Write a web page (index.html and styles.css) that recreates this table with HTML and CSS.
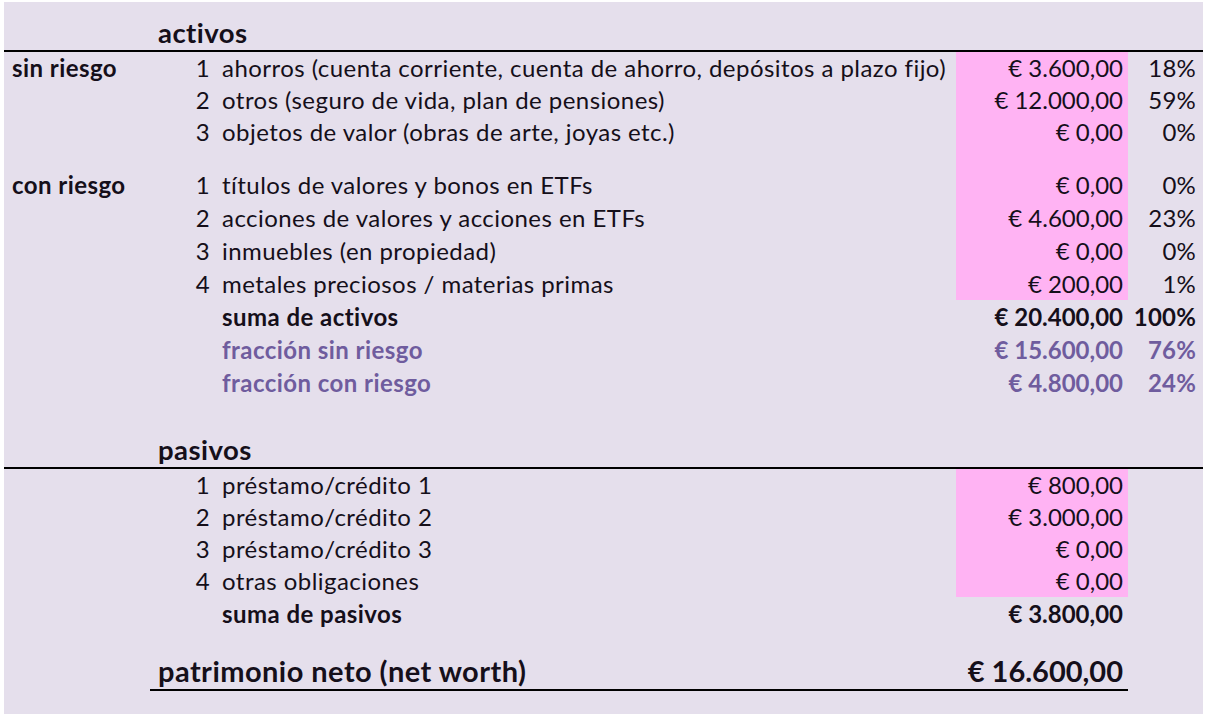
FILE: index.html
```html
<!DOCTYPE html>
<html lang="es">
<head>
<meta charset="utf-8">
<title>activos y pasivos</title>
<link rel="stylesheet" href="styles.css">
</head>
<body>
<div class="sheet">
  <div class="row head"><div class="c-a"></div><div class="title">activos</div></div>

  <div class="row r32"><div class="c-a b">sin riesgo</div><div class="c-n">1</div><div class="c-d">ahorros (cuenta corriente, cuenta de ahorro, depósitos a plazo fijo)</div><div class="c-v pink">€ 3.600,00</div><div class="c-p">18%</div></div>
  <div class="row r32"><div class="c-a"></div><div class="c-n">2</div><div class="c-d">otros (seguro de vida, plan de pensiones)</div><div class="c-v pink">€ 12.000,00</div><div class="c-p">59%</div></div>
  <div class="row r32"><div class="c-a"></div><div class="c-n">3</div><div class="c-d">objetos de valor (obras de arte, joyas etc.)</div><div class="c-v pink">€ 0,00</div><div class="c-p">0%</div></div>
  <div class="row gap"><div class="c-a"></div><div class="c-n"></div><div class="c-d"></div><div class="c-v pink"></div><div class="c-p"></div></div>

  <div class="row"><div class="c-a b">con riesgo</div><div class="c-n">1</div><div class="c-d">títulos de valores y bonos en ETFs</div><div class="c-v pink">€ 0,00</div><div class="c-p">0%</div></div>
  <div class="row"><div class="c-a"></div><div class="c-n">2</div><div class="c-d">acciones de valores y acciones en ETFs</div><div class="c-v pink">€ 4.600,00</div><div class="c-p">23%</div></div>
  <div class="row"><div class="c-a"></div><div class="c-n">3</div><div class="c-d">inmuebles (en propiedad)</div><div class="c-v pink">€ 0,00</div><div class="c-p">0%</div></div>
  <div class="row"><div class="c-a"></div><div class="c-n">4</div><div class="c-d">metales preciosos / materias primas</div><div class="c-v pink">€ 200,00</div><div class="c-p">1%</div></div>
  <div class="row b"><div class="c-a"></div><div class="c-n"></div><div class="c-d">suma de activos</div><div class="c-v">€ 20.400,00</div><div class="c-p">100%</div></div>
  <div class="row b purple"><div class="c-a"></div><div class="c-n"></div><div class="c-d">fracción sin riesgo</div><div class="c-v">€ 15.600,00</div><div class="c-p">76%</div></div>
  <div class="row b purple"><div class="c-a"></div><div class="c-n"></div><div class="c-d">fracción con riesgo</div><div class="c-v">€ 4.800,00</div><div class="c-p">24%</div></div>

  <div class="row blank"></div>
  <div class="row head head2"><div class="c-a"></div><div class="title">pasivos</div></div>

  <div class="row r32"><div class="c-a"></div><div class="c-n">1</div><div class="c-d">préstamo/crédito 1</div><div class="c-v pink">€ 800,00</div><div class="c-p"></div></div>
  <div class="row r32"><div class="c-a"></div><div class="c-n">2</div><div class="c-d">préstamo/crédito 2</div><div class="c-v pink">€ 3.000,00</div><div class="c-p"></div></div>
  <div class="row r32"><div class="c-a"></div><div class="c-n">3</div><div class="c-d">préstamo/crédito 3</div><div class="c-v pink">€ 0,00</div><div class="c-p"></div></div>
  <div class="row r32"><div class="c-a"></div><div class="c-n">4</div><div class="c-d">otras obligaciones</div><div class="c-v pink">€ 0,00</div><div class="c-p"></div></div>
  <div class="row b"><div class="c-a"></div><div class="c-n"></div><div class="c-d">suma de pasivos</div><div class="c-v">€ 3.800,00</div><div class="c-p"></div></div>

  <div class="row total"><div class="c-a"></div><div class="net">patrimonio neto (net worth)</div><div class="c-v net-v">€ 16.600,00</div><div class="c-p"></div></div>
</div>
</body>
</html>
```

FILE: styles.css
```css
* { box-sizing: border-box; }

html, body {
  margin: 0;
  padding: 0;
  background: #ffffff;
}

.sheet {
  margin: 2px 5px 0 4px;
  height: 712px;
  background: #e5dfec;
  font-family: Lato, "Open Sans", sans-serif;
  font-size: 24px;
  letter-spacing: 0.45px;
  color: #150f1a;
  overflow: hidden;
}

.row {
  display: grid;
  grid-template-columns: 146px 64px 742px 172px 75px;
  height: 33px;
}

.row > div {
  display: flex;
  align-items: flex-end;
  padding-bottom: 2px;
  white-space: nowrap;
}

.r32 { height: 32px; }
.gap { height: 20px; }
.blank { height: 33px; }

.head {
  height: 50px;
  border-bottom: 2px solid #000;
}
.head2 { height: 37px; }

.title {
  grid-column: 2 / -1;
  padding-left: 8px;
  font-size: 27.5px;
  font-weight: 700;
  padding-bottom: 1px !important;
}

.c-a { padding-left: 8px; }
.c-n { justify-content: flex-end; padding-right: 4px; }
.c-d { padding-left: 8px; }
.c-v { justify-content: flex-end; padding-right: 5px; letter-spacing: 0; }
.c-p { justify-content: flex-end; padding-right: 7px; letter-spacing: 0.2px; }

.b { font-weight: 700; }
.purple { color: #6f5c9e; }
.pink { background: #ffb3f3; }

.total {
  height: 61px;
  grid-template-columns: 146px 806px 172px 75px;
}
.total .net {
  padding-left: 8px;
  font-size: 29px;
  font-weight: 700;
  border-bottom: 2px solid #000;
  padding-bottom: 1px;
}
.total .net-v {
  font-size: 29px;
  font-weight: 700;
  border-bottom: 2px solid #000;
  padding-bottom: 1px;
}
```
